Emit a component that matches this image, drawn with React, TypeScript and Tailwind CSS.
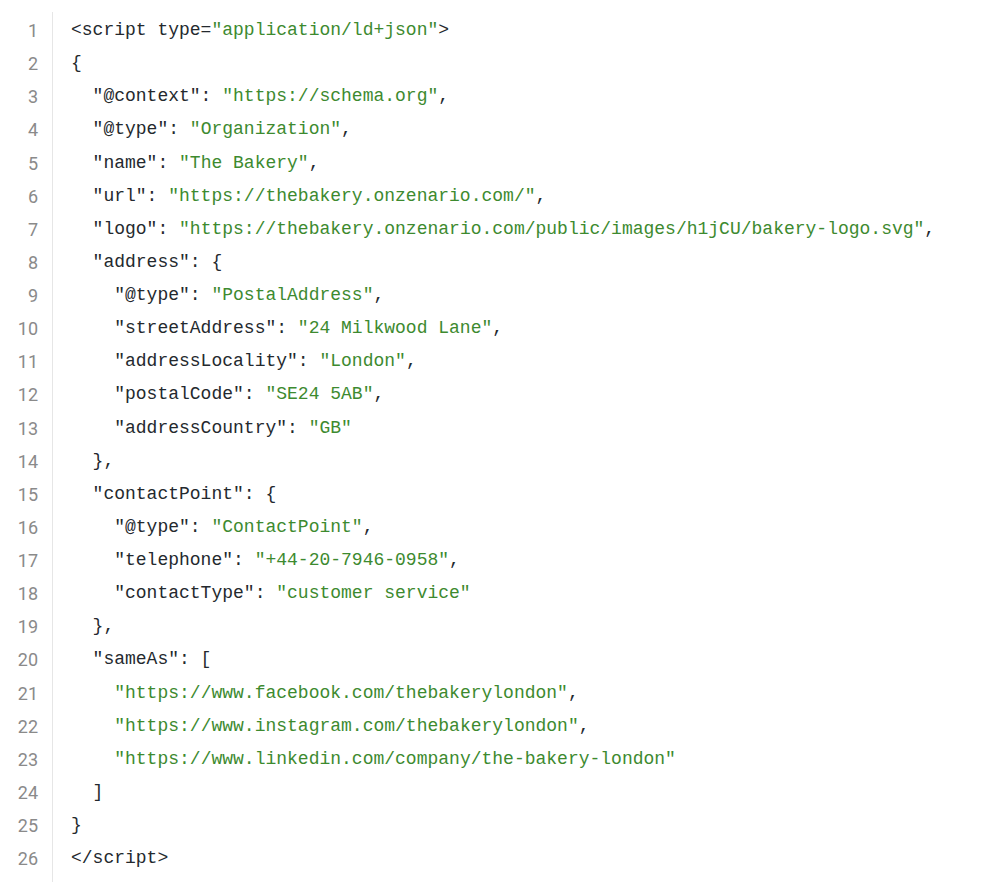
import React from "react";

type Tok = { t: string; g?: boolean };

const lines: Tok[][] = [
  [{ t: "<script type=" }, { t: '"application/ld+json"', g: true }, { t: ">" }],
  [{ t: "{" }],
  [{ t: '  "@context": ' }, { t: '"https://schema.org"', g: true }, { t: "," }],
  [{ t: '  "@type": ' }, { t: '"Organization"', g: true }, { t: "," }],
  [{ t: '  "name": ' }, { t: '"The Bakery"', g: true }, { t: "," }],
  [{ t: '  "url": ' }, { t: '"https://thebakery.onzenario.com/"', g: true }, { t: "," }],
  [{ t: '  "logo": ' }, { t: '"https://thebakery.onzenario.com/public/images/h1jCU/bakery-logo.svg"', g: true }, { t: "," }],
  [{ t: '  "address": {' }],
  [{ t: '    "@type": ' }, { t: '"PostalAddress"', g: true }, { t: "," }],
  [{ t: '    "streetAddress": ' }, { t: '"24 Milkwood Lane"', g: true }, { t: "," }],
  [{ t: '    "addressLocality": ' }, { t: '"London"', g: true }, { t: "," }],
  [{ t: '    "postalCode": ' }, { t: '"SE24 5AB"', g: true }, { t: "," }],
  [{ t: '    "addressCountry": ' }, { t: '"GB"', g: true }],
  [{ t: "  }," }],
  [{ t: '  "contactPoint": {' }],
  [{ t: '    "@type": ' }, { t: '"ContactPoint"', g: true }, { t: "," }],
  [{ t: '    "telephone": ' }, { t: '"+44-20-7946-0958"', g: true }, { t: "," }],
  [{ t: '    "contactType": ' }, { t: '"customer service"', g: true }],
  [{ t: "  }," }],
  [{ t: '  "sameAs": [' }],
  [{ t: "    " }, { t: '"https://www.facebook.com/thebakerylondon"', g: true }, { t: "," }],
  [{ t: "    " }, { t: '"https://www.instagram.com/thebakerylondon"', g: true }, { t: "," }],
  [{ t: "    " }, { t: '"https://www.linkedin.com/company/the-bakery-london"', g: true }],
  [{ t: "  ]" }],
  [{ t: "}" }],
  [{ t: "</script>" }],
];

export default function App() {
  return (
    <div className="w-[1000px] h-[882px] bg-white overflow-hidden flex pt-[12px]">
      <div className="w-[53px] border-r border-[#e6e6e6] pt-[2px] pr-[14px] flex flex-col items-end text-[18px] leading-[33.12px] text-[#8a8a8a] [font-family:Roboto,'Liberation_Sans',sans-serif]">
        {lines.map((_, i) => (
          <div key={i}>{i + 1}</div>
        ))}
        <div className="flex-1" />
      </div>
      <div className="pl-[18px] pt-[2px] text-[18px] leading-[33.12px] text-[#24292e] whitespace-pre [font-family:'Liberation_Mono','DejaVu_Sans_Mono',monospace]">
        {lines.map((l, i) => (
          <div key={i}>
            {l.map((tok, j) => (
              <span key={j} className={tok.g ? "text-[#3d8a2f]" : undefined}>
                {tok.t}
              </span>
            ))}
          </div>
        ))}
      </div>
    </div>
  );
}
